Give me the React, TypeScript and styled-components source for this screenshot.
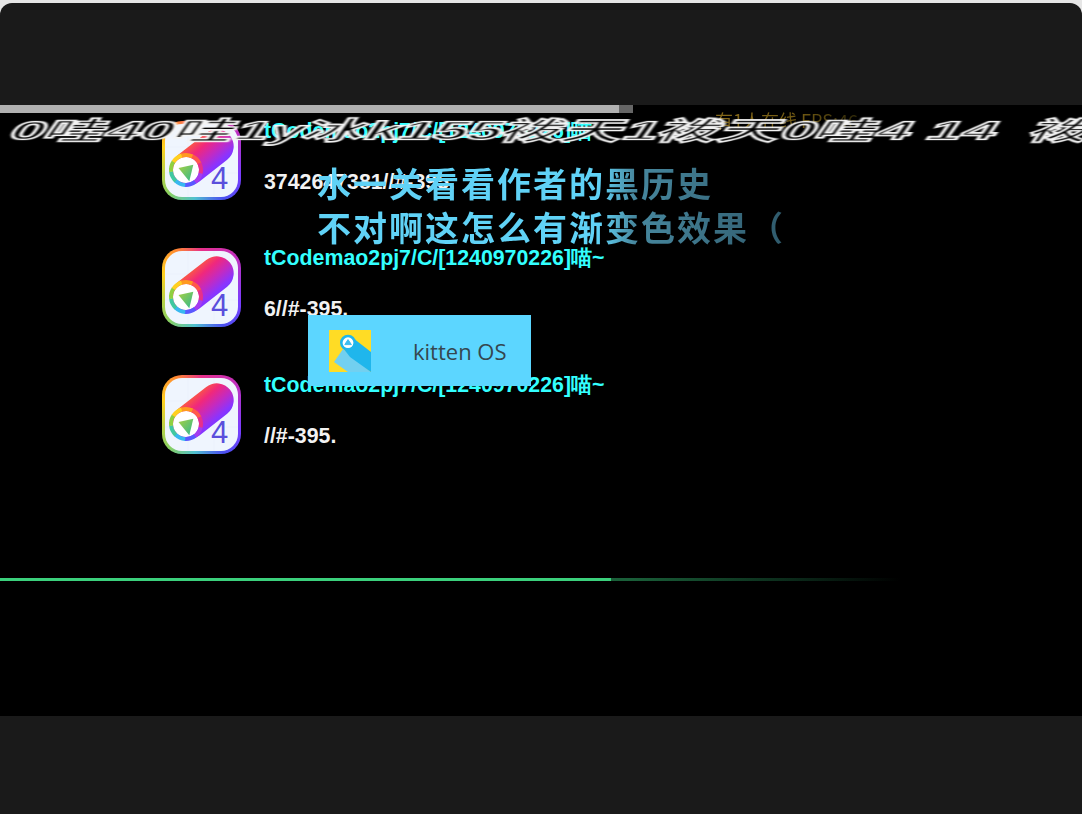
import React from "react";
import styled, { createGlobalStyle } from "styled-components";

const GlobalStyle = createGlobalStyle`
  html, body {
    margin: 0;
    background: #e6e6e6;
    overflow: hidden;
  }
  #root {
    padding-top: 3px;
  }
`;

const Window = styled.div`
  background: #1a1a1a;
  border-radius: 12px 12px 0 0;
  box-sizing: border-box;
  display: flex;
  flex-direction: column;
  height: 811px;
  overflow: hidden;
  padding-top: 102px;
`;

const Stage = styled.main`
  background: #000;
  display: flex;
  flex: 0 0 611px;
  flex-direction: column;
  font-family: "Liberation Sans", Arial, sans-serif;
  overflow: hidden;
  position: relative;
`;

const LoadBar = styled.div`
  display: flex;
  flex: 0 0 8px;
`;

const LoadDone = styled.div`
  background: #b0b0b0;
  width: 619px;
`;

const LoadBuffer = styled.div`
  background: #666;
  width: 14px;
`;

const MessageList = styled.ul`
  display: flex;
  flex-direction: column;
  gap: 48px;
  list-style: none;
  margin: 0;
  padding: 8px 0 0 162px;
`;

const Message = styled.li`
  align-items: flex-start;
  display: flex;
  gap: 23px;
`;

const MessageText = styled.div`
  display: flex;
  flex-direction: column;
  gap: 28px;
`;

const Sender = styled.span`
  color: #3ff;
  font-size: 21.33px;
  font-weight: 700;
  line-height: 23px;
  margin-top: -1px;
  white-space: nowrap;
`;

const Body = styled.span`
  color: #f2f2f2;
  font-size: 21.33px;
  font-weight: 700;
  line-height: 23px;
  white-space: nowrap;
`;

const LogoFrame = styled.div`
  background: conic-gradient(
    from 0deg,
    #e8308a 0deg,
    #c030c0 50deg,
    #7a3cff 110deg,
    #4a50f0 150deg,
    #4fc0d0 190deg,
    #8ad060 225deg,
    #ffd020 290deg,
    #ff8a30 325deg,
    #e8308a 360deg
  );
  border-radius: 20px;
  box-sizing: border-box;
  flex: 0 0 79px;
  height: 79px;
  padding: 3px;
`;

const LogoFace = styled.svg`
  background: #eff5fe;
  border-radius: 17px;
  display: block;
`;

const ProgressTrack = styled.div`
  background: linear-gradient(90deg, #1d6b3f 0%, #1a5f39 70%, #0b2a1a 88%, #000 100%);
  flex: 0 0 3px;
  margin-bottom: 135px;
  margin-top: auto;
  width: 900px;
`;

const ProgressFill = styled.div`
  background: #3bd07c;
  height: 100%;
  width: 611px;
`;

const OnlineNote = styled.div`
  background: linear-gradient(90deg, #86691a 0%, #6f5812 60%, #2c2608 100%);
  -webkit-background-clip: text;
  background-clip: text;
  color: transparent;
  font-family: "Noto Sans CJK SC", sans-serif;
  font-size: 18px;
  left: 715px;
  line-height: 24px;
  position: absolute;
  top: 3px;
  white-space: nowrap;
`;

const Danmaku = styled.div`
  color: #000;
  filter: blur(0.4px);
  font-family: "Liberation Sans", "Noto Sans CJK SC", sans-serif;
  font-size: 26px;
  font-weight: 700;
  left: 12px;
  line-height: 30px;
  position: absolute;
  top: 11px;
  transform: skewX(-36deg) scale(2.36, 0.95);
  transform-origin: left center;
  white-space: pre;
  -webkit-text-stroke: 1.6px #f4f4f4;
`;

const Subtitle = styled.div`
  background: linear-gradient(90deg, #60d2f6 0%, #60d2f6 59%, #47889f 66%, #2d5667 100%);
  -webkit-background-clip: text;
  background-clip: text;
  color: transparent;
  font-family: "Noto Sans CJK SC", sans-serif;
  font-size: 34px;
  font-weight: 700;
  left: 317px;
  letter-spacing: 2px;
  line-height: 44px;
  position: absolute;
  top: 56px;
  white-space: nowrap;
  width: 480px;
`;

const Toast = styled.div`
  align-items: center;
  background: #5cd6ff;
  box-sizing: border-box;
  display: flex;
  gap: 42px;
  height: 71px;
  left: 308px;
  padding-left: 21px;
  position: absolute;
  top: 210px;
  width: 223px;
`;

const ToastLabel = styled.span`
  color: #35474f;
  font-family: "Open Sans", sans-serif;
  font-size: 22px;
`;

// ring on the codemao logo: short arcs so the colour can run round it
const ringColors = ["#ff5a4a", "#e8308a", "#a53cf0", "#5a58ff", "#38b8f0", "#40c8a0", "#90d040", "#ffd020", "#ff9a20"];

const LogoRing: React.FC = () => {
  const cx = 24;
  const cy = 49;
  const r = 15;
  const step = (Math.PI * 2) / ringColors.length;
  return (
    <g fill="none" strokeWidth="4">
      {ringColors.map((color, i) => {
        const a = i * step - Math.PI / 2 + 0.4;
        const b = a + step + 0.03;
        return (
          <path
            key={color}
            stroke={color}
            d={`M${cx + r * Math.cos(a)} ${cy + r * Math.sin(a)}A${r} ${r} 0 0 1 ${cx + r * Math.cos(b)} ${cy + r * Math.sin(b)}`}
          />
        );
      })}
    </g>
  );
};

const CodemaoLogo: React.FC<{ id: string }> = ({ id }) => (
  <LogoFrame>
    <LogoFace width="73" height="73" viewBox="3 3 73 73">
      <defs>
        <linearGradient id={`${id}-pill`} gradientUnits="userSpaceOnUse" x1="24" y1="22" x2="54" y2="56">
          <stop offset="0" stopColor="#ff6a30" />
          <stop offset="0.3" stopColor="#f0287c" />
          <stop offset="0.55" stopColor="#c42ac0" />
          <stop offset="0.8" stopColor="#8a34ff" />
          <stop offset="1" stopColor="#6a3cff" />
        </linearGradient>
        <linearGradient id={`${id}-play`} x1="0" y1="0" x2="1" y2="1">
          <stop offset="0" stopColor="#a8d040" />
          <stop offset="1" stopColor="#30b890" />
        </linearGradient>
      </defs>
      <g stroke="#e4ecf8" strokeWidth="0.5">
        <path d="M3 26H76M3 52H76M26 3V76M52 3V76" />
      </g>
      <path d="M27 47L54.7 25.3" stroke={`url(#${id}-pill)`} strokeWidth="34" strokeLinecap="round" />
      <circle cx="24" cy="49" r="13" fill="#fff" />
      <LogoRing />
      <path d="M16.5 47L31.3 43.7L27.3 60.3Z" fill={`url(#${id}-play)`} />
      <text x="49" y="68" fill="#5a4fdc" fontFamily="Liberation Sans" fontSize="31">
        4
      </text>
    </LogoFace>
  </LogoFrame>
);

const KittenLogo: React.FC = () => (
  <svg width="42" height="42" viewBox="0 0 42 42">
    <rect width="42" height="42" fill="#ffdc25" />
    <path d="M5 32L14 19L42 42H19Z" fill="#72d0f0" />
    <path d="M24 8L42 22V42L21 27L14 18Z" fill="#1fb6ec" />
    <circle cx="19" cy="12.7" r="8" fill="#1fb6ec" />
    <circle cx="19" cy="12.7" r="5.4" fill="#fff" />
    <path d="M19 9.6L22.4 14.6H15.8Z" fill="#3fbdf0" strokeLinejoin="round" stroke="#3fbdf0" strokeWidth="1" />
  </svg>
);

const messages = [
  { id: "m1", body: "3742647381//#-395." },
  { id: "m2", body: "6//#-395." },
  { id: "m3", body: "//#-395." },
];

const App: React.FC = () => (
  <>
    <GlobalStyle />
    <Window>
      <Stage>
        <LoadBar>
          <LoadDone />
          <LoadBuffer />
        </LoadBar>
        <MessageList>
          {messages.map((message) => (
            <Message key={message.id}>
              <CodemaoLogo id={message.id} />
              <MessageText>
                <Sender>tCodemao2pj7/C/[1240970226]喵~</Sender>
                <Body>{message.body}</Body>
              </MessageText>
            </Message>
          ))}
        </MessageList>
        <ProgressTrack>
          <ProgressFill />
        </ProgressTrack>
        <OnlineNote>有1人在线 FPS:46</OnlineNote>
        <Subtitle>
          水一关看看作者的黑历史
          <br />
          不对啊这怎么有渐变色效果（
        </Subtitle>
        <Danmaku>{"0哇40哇1y冰k155袯天1袯天0哇4 14  袯"}</Danmaku>
        <Toast>
          <KittenLogo />
          <ToastLabel>kitten OS</ToastLabel>
        </Toast>
      </Stage>
    </Window>
  </>
);

export default App;
